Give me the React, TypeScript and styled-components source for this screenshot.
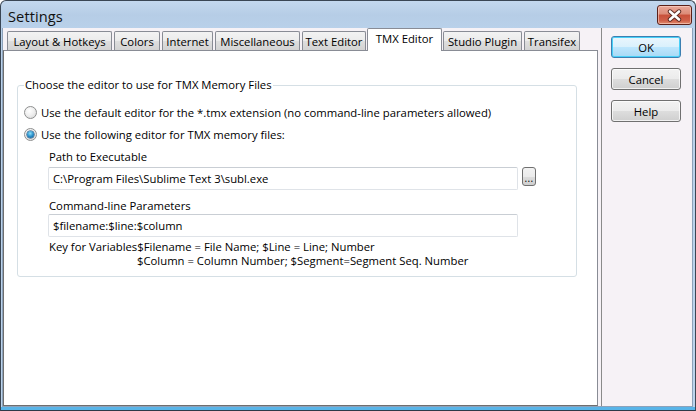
import React from "react";
import styled, { createGlobalStyle, css } from "styled-components";

const Global = createGlobalStyle`
  html, body { margin: 0; padding: 0; background: #fff; overflow: hidden; }
  * { box-sizing: border-box; }
`;

const UI_FONT = `"Open Sans", "Noto Sans", sans-serif`;

const Window = styled.div`
  width: 696px;
  height: 411px;
  display: flex;
  flex-direction: column;
  border: 1px solid #3a4654;
  border-bottom-color: #2c3a48;
  border-radius: 6px 6px 0 0;
  background: linear-gradient(180deg, #c3d8ee 0px, #b6cde6 14px, #b9d1ea 28px, #bcd4ec 100%);
  padding: 0 2px 3px 1px;
  box-shadow: inset 0 -3px 0 #58b4e8;
  font-family: ${UI_FONT};
  font-size: 11.3px;
  color: #000;
`;

const TitleBar = styled.div`
  height: 27px;
  flex: none;
  display: flex;
  align-items: flex-start;
  justify-content: space-between;
  padding: 0 1px 0 6px;
`;

const Title = styled.div`
  font-size: 14.6px;
  line-height: 1;
  margin-top: 8px;
  color: #111;
  letter-spacing: 0.1px;
`;

const CloseButton = styled.div`
  margin-top: 4px;
  width: 35px;
  height: 20px;
  border: 1px solid #5b2018;
  border-radius: 3px;
  background: linear-gradient(180deg, #e9a899 0%, #dc8b77 45%, #c8503a 50%, #cf5f48 80%, #e08c6e 100%);
  box-shadow: inset 0 0 0 1px rgba(255, 220, 210, 0.55);
  display: flex;
  align-items: center;
  justify-content: center;
`;

const Client = styled.div`
  flex: 1;
  display: flex;
  background: #f6f2f6;
  border: 1px solid #8da2ba;
  border-top: none;
  min-height: 0;
`;

const LeftPane = styled.div`
  width: 598px;
  flex: none;
  display: flex;
  flex-direction: column;
  padding-right: 3px;
`;

const TabStrip = styled.div`
  height: 22px;
  flex: none;
  display: flex;
  align-items: flex-end;
  padding-left: 4px;
  gap: 2px;
  position: relative;
  z-index: 1;
`;

const Tab = styled.div<{ $active?: boolean; $w: number }>`
  width: ${(p) => p.$w}px;
  height: 19px;
  flex: none;
  display: flex;
  align-items: center;
  justify-content: center;
  white-space: nowrap;
  border: 1px solid #898c95;
  border-bottom: none;
  border-radius: 2px 2px 0 0;
  background: linear-gradient(180deg, #f3f3f3 0%, #ebebeb 50%, #dedede 51%, #d3d3d3 100%);
  color: #000;
  ${(p) =>
    p.$active &&
    css`
      height: 23px;
      margin: 0 -1px -1px -1px;
      padding-bottom: 3px;
      background: #fff;
    `}
`;

const TabPanel = styled.div`
  flex: 1;
  background: #fff;
  border: 1px solid #898c95;
  border-left-color: #6e6e6e;
  border-bottom-color: #6e6e6e;
  padding: 26px 20px 0 13px;
`;

const Group = styled.fieldset`
  margin: 0;
  padding: 0 0 8px 0;
  border: 1px solid #d5dfe5;
  border-radius: 3px;
  display: flex;
  flex-direction: column;
`;

const Legend = styled.legend`
  margin-left: 6px;
  padding: 0 1px;
  line-height: 16px;
`;

const RadioRow = styled.label<{ $mt: number }>`
  display: flex;
  align-items: center;
  height: 16px;
  margin-left: 6px;
  gap: 4px;
  margin-top: ${(p) => p.$mt}px;
`;

const RadioCircle = styled.span<{ $checked?: boolean }>`
  width: 13px;
  height: 13px;
  border-radius: 50%;
  border: 1px solid #8e8f8f;
  background: radial-gradient(circle at 40% 35%, #ffffff 0%, #f0f0f0 45%, #d4d4d4 100%);
  display: flex;
  align-items: center;
  justify-content: center;
  flex: none;
  &::after {
    content: "";
    display: ${(p) => (p.$checked ? "block" : "none")};
    width: 7px;
    height: 7px;
    border-radius: 50%;
    background: radial-gradient(circle at 45% 35%, #8fe1fb 0%, #2a8fc9 50%, #0e4f86 100%);
    box-shadow: 0 0 0 0.5px #0b3c6a;
  }
`;

const SubSection = styled.div`
  display: flex;
  flex-direction: column;
  padding-left: 30px;
`;

const FieldLabel = styled.div<{ $mt: number }>`
  line-height: 16px;
  margin-top: ${(p) => p.$mt}px;
  padding-left: 1px;
`;

const FieldRow = styled.div<{ $mt: number }>`
  display: flex;
  align-items: flex-start;
  gap: 4px;
  margin-top: ${(p) => p.$mt}px;
`;

const TextInput = styled.div`
  width: 470px;
  height: 23px;
  border: 1px solid #dfe3e8;
  border-top-color: #c9ced4;
  border-radius: 2px;
  padding: 0 4px;
  display: flex;
  align-items: center;
  background: #fff;
  white-space: nowrap;
`;

const BrowseButton = styled.div`
  width: 14px;
  height: 19px;
  border: 1px solid #707070;
  border-radius: 3px;
  background: linear-gradient(180deg, #f2f2f2 0%, #ebebeb 50%, #dddddd 51%, #cfcfcf 100%);
  display: flex;
  align-items: flex-end;
  justify-content: center;
  font-size: 10px;
  line-height: 13px;
  letter-spacing: 0.3px;
`;

const KeyText = styled.div`
  margin-top: 3px;
  line-height: 14px;
  padding-left: 1px;
  white-space: pre;
`;

const KeyIndent = styled.span`
  display: inline-block;
  width: 88px;
`;

const RightPane = styled.div`
  flex: 1;
  border-left: 1px solid #8a8a8a;
  padding: 8px 0 0 9px;
  display: flex;
  flex-direction: column;
  gap: 10px;
`;

const DialogButton = styled.div<{ $default?: boolean }>`
  width: 70px;
  height: 22px;
  border: 1px solid #707070;
  border-radius: 3px;
  background: linear-gradient(180deg, #f2f2f2 0%, #ebebeb 50%, #dddddd 51%, #cfcfcf 100%);
  box-shadow: inset 0 0 0 1px rgba(255, 255, 255, 0.7);
  display: flex;
  align-items: center;
  justify-content: center;
  ${(p) =>
    p.$default &&
    css`
      border-color: #3c7fb1;
      background: linear-gradient(180deg, #eaf6fd 0%, #d9f0fc 50%, #bee6fd 51%, #a7d9f5 100%);
      box-shadow: inset 0 0 0 1px #48d0f8;
    `}
`;

const tabs = [
  { label: "Layout & Hotkeys", w: 105 },
  { label: "Colors", w: 46 },
  { label: "Internet", w: 51 },
  { label: "Miscellaneous", w: 85 },
  { label: "Text Editor", w: 64 },
  { label: "TMX Editor", w: 75 },
  { label: "Studio Plugin", w: 79 },
  { label: "Transifex", w: 56 },
];

function CloseIcon() {
  return (
    <svg width="15" height="13" viewBox="0 0 15 13">
      <path d="M3 2.5 L12 10.5 M12 2.5 L3 10.5" stroke="#5a2a22" strokeWidth="4.4" strokeLinecap="round" />
      <path d="M3 2.5 L12 10.5 M12 2.5 L3 10.5" stroke="#ffffff" strokeWidth="2.6" strokeLinecap="round" />
    </svg>
  );
}

export default function App() {
  return (
    <>
      <Global />
      <Window>
        <TitleBar>
          <Title>Settings</Title>
          <CloseButton>
            <CloseIcon />
          </CloseButton>
        </TitleBar>
        <Client>
          <LeftPane>
            <TabStrip>
              {tabs.map((t) => (
                <Tab key={t.label} $w={t.w} $active={t.label === "TMX Editor"}>
                  {t.label}
                </Tab>
              ))}
            </TabStrip>
            <TabPanel>
              <Group>
                <Legend>Choose the editor to use for TMX Memory Files</Legend>
                <RadioRow $mt={11}>
                  <RadioCircle />
                  Use the default editor for the *.tmx extension (no command-line parameters allowed)
                </RadioRow>
                <RadioRow $mt={6}>
                  <RadioCircle $checked />
                  Use the following editor for TMX memory files:
                </RadioRow>
                <SubSection>
                  <FieldLabel $mt={7}>Path to Executable</FieldLabel>
                  <FieldRow $mt={2}>
                    <TextInput>C:\Program Files\Sublime Text 3\subl.exe</TextInput>
                    <BrowseButton>...</BrowseButton>
                  </FieldRow>
                  <FieldLabel $mt={8}>Command-line Parameters</FieldLabel>
                  <FieldRow $mt={0}>
                    <TextInput>$filename:$line:$column</TextInput>
                  </FieldRow>
                  <KeyText>
                    Key for Variables$Filename = File Name; $Line = Line; Number
                    {"\n"}
                    <KeyIndent />
                    $Column = Column Number; $Segment=Segment Seq. Number
                  </KeyText>
                </SubSection>
              </Group>
            </TabPanel>
          </LeftPane>
          <RightPane>
            <DialogButton $default>OK</DialogButton>
            <DialogButton>Cancel</DialogButton>
            <DialogButton>Help</DialogButton>
          </RightPane>
        </Client>
      </Window>
    </>
  );
}
